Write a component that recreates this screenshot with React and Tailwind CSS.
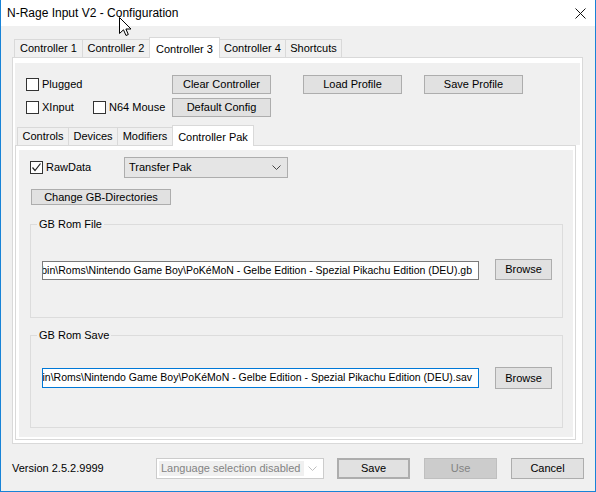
import React from 'react';

const ROM_DIR = 'D:\\Spiele\\Emulatoren\\Project64\\bin\\Roms\\Nintendo Game Boy\\PoKéMoN - Gelbe Edition - Spezial Pikachu Edition (DEU)';

function Btn({ className = '', children }) {
  return (
    <div className={'flex items-center justify-center bg-[#e1e1e1] border border-[#adadad] text-[11px] text-black shrink-0 ' + className}>
      {children}
    </div>
  );
}

function Check({ label, checked, className = '' }) {
  return (
    <div className={'flex items-center ' + className}>
      <div className="w-[13px] h-[13px] border border-[#333333] bg-white flex items-center justify-center shrink-0">
        {checked && (
          <svg width="11" height="11" viewBox="0 0 11 11">
            <polyline points="1.5,5.5 4,8.5 9.5,1.5" fill="none" stroke="#222" strokeWidth="1.2" />
          </svg>
        )}
      </div>
      <span className="ml-[3px] text-[11px] whitespace-nowrap">{label}</span>
    </div>
  );
}

function Tab({ label, className = '', active }) {
  if (active) {
    return (
      <div className={'relative z-10 h-[21px] mb-[-1px] -ml-px bg-white border border-b-0 border-[#d9d9d9] flex items-start justify-center pt-[3px] text-[11px] shrink-0 ' + className}>
        {label}
      </div>
    );
  }
  return (
    <div className={'h-[18px] bg-[#f0f0f0] border border-b-0 border-[#d9d9d9] flex items-center justify-center text-[11px] shrink-0 ' + className}>
      {label}
    </div>
  );
}

// edit box scrolled to its end, so the start of the path is clipped
function PathBox({ text, focused }) {
  return (
    <div
      className={
        'w-[437px] bg-white border flex items-center justify-end overflow-hidden pr-[6px] text-[10.5px] shrink-0 ' +
        (focused ? 'h-[20px] border-[#0078d7]' : 'h-[19px] border-[#7a7a7a]')
      }
    >
      <span className="whitespace-nowrap shrink-0">{text}</span>
    </div>
  );
}

function Group({ title, className = '', children }) {
  return (
    <fieldset className={'ml-[11px] w-[533px] border border-[#dcdcdc] shrink-0 ' + className}>
      <legend className="ml-[6px] px-[2px] text-[11px] leading-[13px]">{title}</legend>
      {children}
    </fieldset>
  );
}

export default function App() {
  return (
    <div className="relative w-[596px] h-[492px] flex flex-col bg-[#f0f0f0] border-l border-r border-b border-[#1883d7] overflow-hidden text-black font-['Liberation_Sans',Arial,sans-serif]">
      {/* title bar */}
      <div className="h-[26px] bg-white flex items-center justify-between pl-[6px] pr-[9px] text-[12px] shrink-0">
        <span>N-Rage Input V2 - Configuration</span>
        <svg width="11" height="11" viewBox="0 0 11 11">
          <path d="M0.5 0.5 L10.5 10.5 M10.5 0.5 L0.5 10.5" stroke="#111" strokeWidth="1" />
        </svg>
      </div>

      {/* controller tabs */}
      <div className="mt-[11px] h-[20px] flex items-end pl-[13px] shrink-0">
        <Tab label="Controller 1" className="w-[69px]" />
        <Tab label="Controller 2" className="w-[68px] -ml-px" />
        <Tab label="Controller 3" className="w-[71px]" active />
        <Tab label="Controller 4" className="w-[67px] -ml-px" />
        <Tab label="Shortcuts" className="w-[57px] -ml-px" />
      </div>

      <div className="ml-[11px] w-[571px] h-[387px] border border-[#d9d9d9] bg-white pl-[2px] pt-[5px] pr-[2px] pb-[1px] flex shrink-0">
        <div className="flex-1 bg-[#f0f0f0] flex flex-col">
          <div className="mt-[12px] h-[19px] flex items-center">
            <div className="w-[157px] pl-[11px]">
              <Check label="Plugged" />
            </div>
            <Btn className="w-[99px] h-[19px]">Clear Controller</Btn>
            <Btn className="w-[99px] h-[19px] ml-[32px]">Load Profile</Btn>
            <Btn className="w-[99px] h-[19px] ml-[22px]">Save Profile</Btn>
          </div>
          <div className="mt-[4px] h-[19px] flex items-center">
            <div className="w-[157px] pl-[11px] flex items-center">
              <Check label="XInput" className="w-[67px]" />
              <Check label="N64 Mouse" />
            </div>
            <Btn className="w-[99px] h-[19px]">Default Config</Btn>
          </div>

          {/* pak tabs */}
          <div className="mt-[8px] h-[20px] flex items-end pl-[2px] shrink-0">
            <Tab label="Controls" className="w-[52px]" />
            <Tab label="Devices" className="w-[50px] -ml-px" />
            <Tab label="Modifiers" className="w-[56px] -ml-px" />
            <Tab label="Controller Pak" className="w-[82px]" active />
          </div>

          <div className="flex-1 bg-white pr-[4px] pb-[2px] flex">
            <div className="flex-1 border border-[#d9d9d9] bg-white pl-[3px] pt-[4px] pr-[2px] pb-[2px] flex">
              <div className="flex-1 bg-[#f0f0f0] flex flex-col">
                <div className="mt-[7px] h-[21px] flex items-center">
                  <div className="w-[105px] pl-[11px]">
                    <Check label="RawData" checked />
                  </div>
                  <div className="w-[164px] h-[21px] bg-[#e5e5e5] border border-[#adadad] flex items-center justify-between pl-[4px] pr-[6px] text-[11px]">
                    <span>Transfer Pak</span>
                    <svg width="9" height="5" viewBox="0 0 9 5">
                      <polyline points="0.5,0.5 4.5,4.5 8.5,0.5" fill="none" stroke="#444" strokeWidth="1" />
                    </svg>
                  </div>
                </div>

                <Btn className="mt-[11px] ml-[12px] w-[140px] h-[16px] pt-[1px]">Change GB-Directories</Btn>

                <Group title="GB Rom File" className="mt-[13px] h-[100px]">
                  <div className="mt-[28px] ml-[11px] h-[21px] flex items-end">
                    <PathBox text={ROM_DIR + '.gb'} />
                    <Btn className="ml-[16px] w-[57px] h-[21px]">Browse</Btn>
                  </div>
                </Group>

                <Group title="GB Rom Save" className="mt-[11px] h-[99px]">
                  <div className="mt-[25px] ml-[11px] h-[22px] flex items-center">
                    <PathBox text={ROM_DIR + '.sav'} focused />
                    <Btn className="ml-[16px] w-[57px] h-[22px]">Browse</Btn>
                  </div>
                </Group>
              </div>
            </div>
          </div>
        </div>
      </div>

      {/* bottom bar */}
      <div className="mt-[14px] h-[21px] flex items-center pl-[11px] text-[11px] shrink-0">
        <span className="w-[144px] shrink-0">Version 2.5.2.9999</span>
        <div className="w-[168px] h-[21px] bg-white border border-[#cccccc] flex items-center pl-[2px] pr-[6px] shrink-0">
          <div className="w-[145px] h-[15px] bg-[#f0f0f0] flex items-center pl-[2px] text-[#838383] whitespace-nowrap overflow-hidden">
            Language selection disabled
          </div>
          <svg className="ml-auto" width="9" height="5" viewBox="0 0 9 5">
            <polyline points="0.5,0.5 4.5,4.5 8.5,0.5" fill="none" stroke="#bfbfbf" strokeWidth="1" />
          </svg>
        </div>
        <Btn className="ml-[13px] w-[73px] h-[21px] border-2 border-[#0078d7]">Save</Btn>
        <div className="ml-[14px] w-[73px] h-[21px] bg-[#cccccc] border border-[#bfbfbf] flex items-center justify-center text-[#838383] shrink-0">Use</div>
        <Btn className="ml-[14px] w-[73px] h-[21px]">Cancel</Btn>
      </div>

      {/* mouse pointer */}
      <svg className="absolute left-[118px] top-[17px]" width="13" height="20" viewBox="0 0 13 20">
        <path d="M0.5 0.5 L0.5 16.5 L4.5 12.8 L7 18.5 L9.3 17.5 L6.9 12 L12 12 Z" fill="#fff" stroke="#000" strokeWidth="1" strokeLinejoin="miter" />
      </svg>
    </div>
  );
}
